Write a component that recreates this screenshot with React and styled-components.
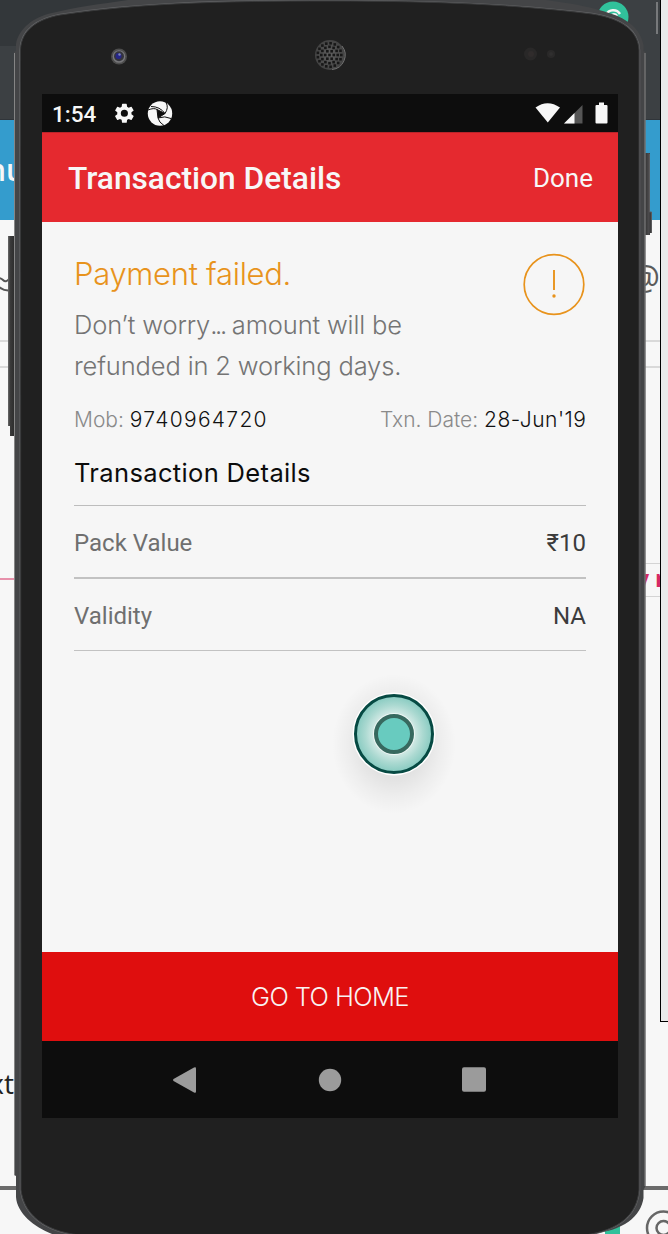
import React from "react";
import styled, { createGlobalStyle } from "styled-components";

const Global = createGlobalStyle`
  * { box-sizing: border-box; }
  body { margin: 0; background: #f7f7f7; overflow: hidden; }
`;

const Stage = styled.main`
  position: relative;
  width: 668px;
  height: 1234px;
  overflow: hidden;
  background: #f7f7f7;
`;

/* Window behind the phone */
const Desktop = styled.div`
  width: 668px;
  display: flex;
  flex-direction: column;
`;

const Strip = styled.div`
  flex: none;
  height: ${(p) => p.$h}px;
  padding-right: ${(p) => (p.$wide ? 0 : 8)}px;
  background: ${(p) => p.$bg || "transparent"};
  display: flex;
  justify-content: space-between;
  align-items: ${(p) => p.$align || "center"};
  overflow: hidden;
  ${(p) => p.$line && `border-bottom: ${p.$w || 2}px solid ${p.$line};`}
`;

const Peek = styled.span`
  font: ${(p) => p.$weight || 400} ${(p) => p.$size}px/1 "Open Sans", "Noto Sans", sans-serif;
  color: ${(p) => p.$color};
  width: ${(p) => p.$width || 15}px;
  padding-bottom: ${(p) => p.$lift || 0}px;
  display: flex;
  justify-content: ${(p) => (p.$end ? "flex-end" : "flex-start")};
  white-space: pre;
`;

const Side = styled.aside`
  position: absolute;
  top: 0;
  right: 0;
  width: 8px;
  height: 1022px;
  background: #e9e9e9;
  border-left: 1px solid #000;
  border-bottom: 1px solid #000;
`;

const ChipBox = styled.div`
  width: 24px;
  height: 34px;
  border: 1px solid #d4d4d4;
  border-width: 1px 0;
  display: flex;
  align-items: center;
  overflow: hidden;
`;

/* Phone */
const Phone = styled.div`
  position: absolute;
  inset: 0;
  padding: 94px 50px 0 42px;
`;

const ShellArt = styled.svg`
  position: absolute;
  inset: 0;
`;

const Screen = styled.section`
  position: relative;
  width: 576px;
  height: 1024px;
  display: flex;
  flex-direction: column;
  background: #f6f6f6;
`;

const StatusBar = styled.div`
  height: 38px;
  background: #0d0d0d;
  color: #f7f7f7;
  display: flex;
  align-items: center;
  padding: 0 10px;
`;

const Clock = styled.time`
  font: 500 22.500px/38px Roboto, sans-serif;
  width: 62px;
  padding-top: 1px;
  white-space: nowrap;
`;

const StatusIcons = styled.div`
  display: flex;
  margin-left: ${(p) => (p.$push ? "auto" : 0)};
`;

const Header = styled.header`
  height: 90px;
  background: #e5292f;
  border-top: 1px solid #b9242a;
  color: #f7f7f7;
  display: flex;
  align-items: center;
  justify-content: space-between;
  padding: 1px 25px 0 26px;
  font-family: Roboto, sans-serif;
`;

const Title = styled.h1`
  margin: 0;
  font-size: 31.700px;
  font-weight: 500;
`;

const Done = styled.span`
  font-size: 26px;
`;

const Body = styled.div`
  flex: 1;
  padding: 31px 32px 0;
  font-family: Inter, "Noto Sans", sans-serif;
  font-weight: 300;
`;

const Summary = styled.div`
  display: flex;
  justify-content: space-between;
  height: 135px;
`;

const Failed = styled.h2`
  margin: 0;
  font-weight: 300;
  font-size: 31px;
  line-height: 42px;
  letter-spacing: -0.300px;
  color: #e8931c;
  white-space: nowrap;
`;

const Message = styled.p`
  margin: 9px 0 0;
  font-size: 25.500px;
  line-height: 41px;
  letter-spacing: -0.150px;
  color: #747474;
  white-space: nowrap;
`;

const Dots = styled.span`
  letter-spacing: -2.300px;
`;

const Meta = styled.div`
  display: flex;
  justify-content: space-between;
  font-size: 21px;
  line-height: 30px;
  margin-top: 17px;
  height: 30px;
  color: #8a8a8a;
  white-space: pre;
`;

const Strong = styled.span`
  color: #111;
  letter-spacing: ${(p) => p.$ls}px;
  margin-right: ${(p) => -p.$ls}px;
`;

const Section = styled.h3`
  margin: 20px 0 0;
  height: 51px;
  font-weight: 400;
  font-size: 25.500px;
  line-height: 36px;
  letter-spacing: 0.350px;
  color: #0c0c0c;
  border-bottom: 1px solid #bdbdbd;
  white-space: nowrap;
`;

const Row = styled.div`
  display: flex;
  justify-content: space-between;
  align-items: center;
  height: ${(p) => p.$h}px;
  padding-top: 2px;
  border-bottom: ${(p) => p.$b}px solid #c2c2c2;
  font: 400 24px/1 Roboto, "Noto Sans", sans-serif;
  color: #6f6f6f;
`;

const Value = styled.span`
  color: #3c3c3c;
`;

const HomeButton = styled.button`
  height: 89px;
  border: 0;
  padding: 1px 0 0;
  background: #df0e0e;
  color: #f9f3f3;
  font: 300 25.500px/1 Inter, sans-serif;
  letter-spacing: ${(p) => p.$ls}px;
`;

const NavBar = styled.nav`
  height: 77px;
  background: #0d0d0d;
  display: flex;
  justify-content: center;
  align-items: center;
  gap: 120px;
`;

const BackIcon = styled.svg`
  overflow: visible;
`;

const Touch = styled.svg`
  position: absolute;
  left: 286px;
  top: 574px;
`;

const outline =
  "M14 52 L16 51 L16 44 C19 28 34 17 52 13 C76 7 100 4 128 0 L128 -8 H546 V0 C575 4 592 7 612 14 C632 21 641 32 643.500 45 L643.500 51 L645.500 52 V1186 L643.500 1190 V1198 C641 1216 624 1231 590 1234 L590 1245 H52 V1234 C34 1227 17 1213 16 1197 V1176 L14 1175 Z";
const inner =
  "M20.500 50 C21 30 38 19 60 15 C140 3 220 1 330 1 C440 1 520 5 592 14 C624 19 638 32 639 50 V1190 C637 1215 619 1230 585 1235 L80 1235 C42 1231 24 1213 21 1190 Z";

const holes = [];
[[0, 0, 1], [1, 4.3, 6], [2, 8.2, 12], [3, 11.8, 17]].forEach(([k, r, n]) => {
  for (let i = 0; i < n; i++) {
    const a = (i / n) * Math.PI * 2;
    holes.push([329.5 + r * Math.cos(a), 55 + r * Math.sin(a), k + "-" + i]);
  }
});

function Shell() {
  return (
    <ShellArt width="668" height="1234" viewBox="0 0 668 1234">
      <defs>
        <linearGradient id="key" x1="0" x2="1">
          <stop offset="0" stopColor="#6b6b6b" />
          <stop offset=".3" stopColor="#3b3b3b" />
          <stop offset="1" stopColor="#2a2a2a" />
        </linearGradient>
        <linearGradient id="keyR" x1="0" x2="1">
          <stop offset="0" stopColor="#333" />
          <stop offset=".5" stopColor="#4a494b" />
          <stop offset="1" stopColor="#343434" />
        </linearGradient>
        <radialGradient id="mesh">
          <stop offset="0" stopColor="#606060" />
          <stop offset="1" stopColor="#424242" />
        </radialGradient>
      </defs>
      <path d="M8 236H15V436H10V426H8Z" fill="url(#key)" />
      <path d="M645 153H650V212H652V233H650V235H645Z" fill="url(#keyR)" />
      <path d="M649.500 154V212H651.500V233" fill="none" stroke="#5a5a5c" />
      <path d={outline} fill="#444547" />
      <path d="M14.500 53V1175M645 53V1186" stroke="#858585" fill="none" />
      <path d={inner} fill="#202020" stroke="#606163" strokeWidth="2.500" />
      <path d={inner} fill="#202020" stroke="#38393a" strokeWidth="1" />
      <circle cx="119" cy="56.500" r="8" fill="#4d4d4d" />
      <circle cx="119" cy="56.500" r="6.300" fill="#77777a" />
      <circle cx="119" cy="56.300" r="5" fill="#35353c" />
      <circle cx="118.500" cy="56" r="3" fill="#26268a" />
      <circle cx="119.500" cy="54.500" r="1.200" fill="#7c86b4" />
      <circle cx="330" cy="55" r="15" fill="url(#mesh)" />
      <path d="M332 69.500A14.500 14.500 0 0 0 342 46" fill="none" stroke="#707070" />
      {holes.map(([x, y, k]) => (
        <rect key={k} x={x - 1.3} y={y - 1.3} width="2.600" height="2.600" fill="#171717" />
      ))}
      <circle cx="530.500" cy="54" r="6.500" fill="#292828" />
      <circle cx="531" cy="54" r="3" fill="#302c2c" />
      <circle cx="551" cy="54" r="4" fill="#2a2929" />
      <circle cx="551" cy="54" r="2" fill="#302f2f" />
    </ShellArt>
  );
}

function Background() {
  return (
    <Desktop>
      <Strip $h={46} $bg="linear-gradient(90deg,#33373a 0 300px,#3c4043 300px)" $align="flex-start">
        <span />
        <svg width="70" height="46" viewBox="0 0 70 46">
          <circle cx="23" cy="17" r="15.500" fill="#31c19b" />
          <path d="M16 15A8 8 0 0 1 30 14M20 17A4 4 0 0 1 27 16" fill="none" stroke="#f5f5f5" strokeWidth="2.500" />
          <rect x="66" y="2" width="2" height="32" fill="#77797b" />
        </svg>
      </Strip>
      <Strip $h={74} $bg="#3c4043" $line="#30353a" $w={1} />
      <Strip $h={100} $bg="#349ccd">
        <Peek $size={30} $color="#f7f7f7" $weight={600} $width={25} $end>nu</Peek>
      </Strip>
      <Strip $h={122} $line="#d9d9d9">
        <svg width="16" height="30" viewBox="0 0 16 30">
          <path d="M-4 14Q0 12 3 15T9 14M-3 20Q3 27 12 25" fill="none" stroke="#555" strokeWidth="2" />
        </svg>
        <Peek $size={34} $color="#5b5b5b" $weight={500} $width={27} $lift={6} $end>@</Peek>
      </Strip>
      <Strip $h={26} $line="#d9d9d9" />
      <Strip $h={195} />
      <Strip $h={34}>
        <svg width="16" height="34"><path d="M0 16H16" stroke="#e791ab" strokeWidth="2" /></svg>
        <ChipBox>
          <Peek $size={23} $color="#d62963" $weight={700} $width={40} $lift={3}>y n</Peek>
        </ChipBox>
      </Strip>
      <Strip $h={469} />
      <Strip $h={38}>
        <Peek $size={28} $color="#222" $width={14} $lift={4} $end>xt</Peek>
      </Strip>
      <Strip $h={86} $line="#6b6b6b" $w={4} $wide />
      <Strip $h={44} $align="flex-start" $wide>
        <span />
        <svg width="68" height="44" viewBox="0 0 68 44">
          <rect x="5" y="30" width="15" height="14" fill="#31c19b" />
          <circle cx="63.500" cy="38" r="16.500" fill="none" stroke="#666" strokeWidth="2.500" />
          <circle cx="63.500" cy="38" r="7" fill="none" stroke="#666" strokeWidth="2.500" />
        </svg>
      </Strip>
    </Desktop>
  );
}

export default function App() {
  return (
    <Stage>
      <Global />
      <Background />
      <Side />
      <Phone>
        <Shell />
        <Screen>
          <StatusBar>
            <Clock>1:54</Clock>
            <StatusIcons>
              <svg width="60" height="38" viewBox="0 0 60 38">
                <g transform="translate(-1.500 7.400) scale(.99)">
                  <path fill="#f7f7f7" fillRule="evenodd" d="M19.140 12.940c.04-.3.060-.61.060-.94s-.02-.64-.07-.94l2.030-1.580a.49.490 0 0 0 .12-.61l-1.920-3.320a.49.490 0 0 0-.59-.22l-2.390.96a7 7 0 0 0-1.620-.94L14.400 2.810a.48.480 0 0 0-.48-.41h-3.840a.47.470 0 0 0-.47.410l-.36 2.540a7 7 0 0 0-1.620.94l-2.390-.96a.47.470 0 0 0-.59.220L2.740 8.870a.47.470 0 0 0 .12.610l2.030 1.580c-.05.300-.09.630-.09.940s.02.640.07.940l-2.030 1.580a.49.490 0 0 0-.12.610l1.920 3.320c.12.220.37.290.59.220l2.390-.96c.5.380 1.030.700 1.620.940l.36 2.540c.05.240.24.410.48.410h3.840c.24 0 .44-.17.470-.41l.36-2.540a7 7 0 0 0 1.620-.94l2.390.96c.22.080.47 0 .59-.22l1.920-3.320a.47.470 0 0 0-.12-.61zM12 15.600a3.600 3.600 0 1 1 0-7.200 3.600 3.600 0 0 1 0 7.200z" />
                </g>
                <g transform="translate(46 19.500)">
                  <circle r="12.200" fill="#f7f7f7" />
                  <path d="M-3-4L5 0L-2 4.500Z" fill="#0d0d0d" stroke="#0d0d0d" />
                  <path d="M-12-3.500Q-6-6 -3-4M-9-7Q0-7 5 0M6-11Q9-6 5 0M11 5Q5 2-2 4.500M4 12Q-1 9-2 4.500" fill="none" stroke="#0d0d0d" strokeWidth="1" />
                </g>
              </svg>
            </StatusIcons>
            <StatusIcons $push>
              <svg width="74" height="38" viewBox="0 0 74 38">
                <path d="M1.500 13.500Q13.500 5 26 13.500L13.800 28.500Z" fill="#f7f7f7" />
                <path d="M30 29.500L48.500 11V29.500Z" fill="#555" />
                <path d="M30 29.500L40.500 19V29.500Z" fill="#f7f7f7" />
                <path d="M65 8.500h5v2.500h2.500q1 0 1 1v16.500q0 1-1 1h-10q-1 0-1-1v-16.500q0-1 1-1h2.500z" fill="#f7f7f7" />
              </svg>
            </StatusIcons>
          </StatusBar>
          <Header>
            <Title>Transaction Details</Title>
            <Done>Done</Done>
          </Header>
          <Body>
            <Summary>
              <div>
                <Failed>Payment failed.</Failed>
                <Message>
                  Don’t worry<Dots>...</Dots> amount will be
                  <br />
                  refunded in 2 working days.
                </Message>
              </div>
              <svg width="64" height="64" viewBox="0 0 64 64">
                <circle cx="32" cy="31.500" r="29.800" fill="none" stroke="#e8931c" strokeWidth="1.700" />
                <path d="M32 17V37" stroke="#e8931c" strokeWidth="1.900" />
                <circle cx="32" cy="43" r="1.700" fill="#e8931c" />
              </svg>
            </Summary>
            <Meta>
              <span>Mob: <Strong $ls={1.3}>9740964720</Strong></span>
              <span>Txn. Date: <Strong $ls={0.5}>28-Jun'19</Strong></span>
            </Meta>
            <Section>Transaction Details</Section>
            <Row $h={73} $b={2}>
              <span>Pack Value</span>
              <Value>₹10</Value>
            </Row>
            <Row $h={72} $b={1}>
              <span>Validity</span>
              <Value>NA</Value>
            </Row>
          </Body>
          <HomeButton $ls={-0.6}>GO TO HOME</HomeButton>
          <NavBar>
            <BackIcon width="24" height="28" viewBox="0 0 24 28">
              <path d="M-.500 13L20 1.500Q22 .500 22 2.500V25.500Q22 27.500 20 26.500L-.500 15Q-1.500 14 -.500 13Z" fill="#9b9b9b" />
            </BackIcon>
            <svg width="24" height="24" viewBox="0 0 24 24">
              <circle cx="12" cy="12" r="11.200" fill="#9b9b9b" />
            </svg>
            <svg width="24" height="25" viewBox="0 0 24 25">
              <rect y=".3" width="24" height="24.400" rx="2" fill="#9b9b9b" />
            </svg>
          </NavBar>
          <Touch width="132" height="150" viewBox="0 0 132 150">
            <defs>
              <radialGradient id="halo">
                <stop offset=".5" stopColor="#000" stopOpacity=".08" />
                <stop offset=".75" stopColor="#000" stopOpacity=".035" />
                <stop offset="1" stopColor="#000" stopOpacity="0" />
              </radialGradient>
              <radialGradient id="ring">
                <stop offset=".45" stopColor="#e0efec" />
                <stop offset=".75" stopColor="#abd9d1" />
                <stop offset="1" stopColor="#86cac0" />
              </radialGradient>
            </defs>
            <ellipse cx="66" cy="76" rx="62" ry="70" fill="url(#halo)" />
            <circle cx="66" cy="66" r="41.500" fill="#fff" />
            <circle cx="66" cy="66" r="38.500" fill="url(#ring)" stroke="#064a43" strokeWidth="3" />
            <circle cx="66" cy="66" r="21" fill="#eef7f5" />
            <circle cx="66" cy="66" r="18" fill="#68cbbf" stroke="#37695f" strokeWidth="4" />
          </Touch>
        </Screen>
      </Phone>
    </Stage>
  );
}
